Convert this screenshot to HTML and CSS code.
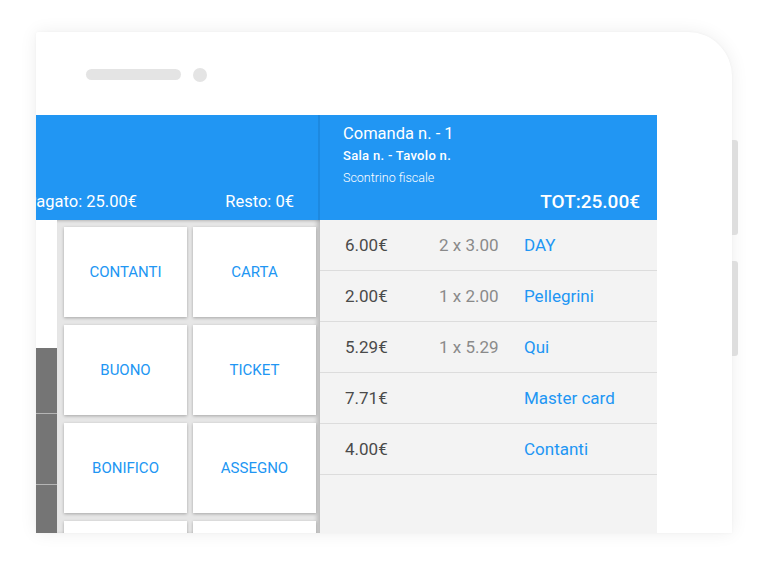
FILE: index.html
```html
<!DOCTYPE html>
<html lang="it">
<head>
<meta charset="utf-8">
<title>Comanda</title>
<link rel="stylesheet" href="styles.css">
</head>
<body>
<div class="device">
  <div class="side-btn side-btn-1"></div>
  <div class="side-btn side-btn-2"></div>
  <div class="topbar">
    <span class="speaker"></span>
    <span class="camera"></span>
  </div>
  <div class="screen">
    <div class="pay-panel">
      <div class="pay-head">
        <span class="paid">Pagato: 25.00€</span>
        <span class="change">Resto: 0€</span>
      </div>
      <div class="pay-body">
        <div class="strip">
          <div class="strip-blank"></div>
          <div class="strip-key strip-key-first"></div>
          <div class="strip-key"></div>
          <div class="strip-key strip-key-last"></div>
        </div>
        <div class="methods">
          <button class="method">CONTANTI</button>
          <button class="method">CARTA</button>
          <button class="method">BUONO</button>
          <button class="method">TICKET</button>
          <button class="method">BONIFICO</button>
          <button class="method">ASSEGNO</button>
          <button class="method"></button>
          <button class="method"></button>
        </div>
      </div>
    </div>
    <div class="order-panel">
      <div class="order-head">
        <div class="order-title">Comanda n. - 1</div>
        <div class="order-sub">Sala n. - Tavolo n.</div>
        <div class="order-type">Scontrino fiscale</div>
        <div class="order-total">TOT:25.00€</div>
      </div>
      <ul class="order-list">
        <li class="row"><span class="amount">6.00€</span><span class="qty">2 x 3.00</span><span class="name">DAY</span></li>
        <li class="row"><span class="amount">2.00€</span><span class="qty">1 x 2.00</span><span class="name">Pellegrini</span></li>
        <li class="row"><span class="amount">5.29€</span><span class="qty">1 x 5.29</span><span class="name">Qui</span></li>
        <li class="row"><span class="amount">7.71€</span><span class="qty"></span><span class="name">Master card</span></li>
        <li class="row"><span class="amount">4.00€</span><span class="qty"></span><span class="name">Contanti</span></li>
      </ul>
    </div>
  </div>
</div>
</body>
</html>
```

FILE: styles.css
```css
* { box-sizing: border-box; }

html, body {
  margin: 0;
  padding: 0;
  background: #ffffff;
  font-family: Roboto, "Noto Sans", "Liberation Sans", sans-serif;
}

body {
  width: 768px;
  height: 576px;
  overflow: hidden;
  padding: 32px 0 0 36px;
}

.device {
  position: relative;
  width: 696px;
  height: 501px;
  background: #ffffff;
  border-radius: 2px 44px 0 0;
  box-shadow: 0 0 18px rgba(0, 0, 0, 0.07), 0 0 3px rgba(0, 0, 0, 0.04);
}

.side-btn {
  position: absolute;
  left: 696px;
  width: 6px;
  background: #dedede;
  border-radius: 0 3px 3px 0;
}
.side-btn-1 { top: 108px; height: 95px; }
.side-btn-2 { top: 229px; height: 95px; }

.topbar {
  height: 83px;
  display: flex;
  align-items: center;
  gap: 12px;
  padding: 2px 0 0 50px;
}

.speaker {
  width: 95px;
  height: 11px;
  border-radius: 6px;
  background: #e4e4e4;
}

.camera {
  width: 14px;
  height: 14px;
  border-radius: 50%;
  background: #e4e4e4;
}

.screen {
  display: flex;
  width: 621px;
  height: 418px;
}

/* left: payment panel */
.pay-panel {
  width: 284px;
  display: flex;
  flex-direction: column;
  overflow: hidden;
}

.pay-head {
  flex: 0 0 105px;
  height: 105px;
  background: #2196f3;
  color: #ffffff;
  display: flex;
  align-items: flex-end;
  justify-content: space-between;
  padding: 0 24px 9px 0;
  font-size: 16.5px;
  border-right: 2px solid #1d89e0;
}

.paid { margin-left: -10px; }

.pay-body {
  flex: 1;
  min-height: 0;
  display: flex;
}

.strip {
  width: 21px;
  display: flex;
  flex-direction: column;
}

.strip-blank {
  height: 128px;
  background: #ffffff;
}

.strip-key {
  height: 71px;
  background: #757575;
  border-top: 1px solid #b5b5b5;
}
.strip-key-first { height: 65px; border-top: none; }
.strip-key-last { flex: 1; }

.methods {
  flex: 1;
  background: #e6e6e6;
  display: grid;
  grid-template-columns: 123px 123px;
  grid-auto-rows: 90px;
  column-gap: 6px;
  row-gap: 8px;
  padding: 7px 0 0 7px;
  overflow: hidden;
  box-shadow: inset -4px 0 4px -1px rgba(0, 0, 0, 0.18), inset 0 3px 3px -2px rgba(0, 0, 0, 0.15);
}

.method {
  border: none;
  margin: 0;
  background: #ffffff;
  color: #2196f3;
  font-family: Roboto, "Noto Sans", "Liberation Sans", sans-serif;
  font-size: 15px;
  box-shadow: 0 1px 3px rgba(0, 0, 0, 0.28);
  padding: 0;
}

/* right: order panel */
.order-panel {
  width: 337px;
  display: flex;
  flex-direction: column;
  background: #f3f3f3;
}

.order-head {
  flex: 0 0 105px;
  height: 105px;
  background: #2196f3;
  color: #ffffff;
  padding: 8px 17px 0 23px;
  display: flex;
  flex-direction: column;
}

.order-title {
  font-size: 16.5px;
  line-height: 22px;
}

.order-sub {
  font-size: 13px;
  font-weight: 500;
  letter-spacing: 0.3px;
  line-height: 18px;
  margin-top: 2px;
}

.order-type {
  font-size: 12.5px;
  font-weight: 300;
  line-height: 16px;
  margin-top: 5px;
}

.order-total {
  font-size: 19px;
  font-weight: 500;
  text-align: right;
  line-height: 22px;
  margin-top: 5px;
}

.order-list {
  list-style: none;
  margin: 0;
  padding: 0;
}

.row {
  height: 51px;
  display: flex;
  align-items: center;
  padding: 0 0 0 25px;
  border-bottom: 1px solid #dcdcdc;
  font-size: 17px;
}

.amount {
  width: 94px;
  color: #4a4a4a;
}

.qty {
  width: 85px;
  color: #8a8a8a;
}

.name {
  color: #2196f3;
}
```
